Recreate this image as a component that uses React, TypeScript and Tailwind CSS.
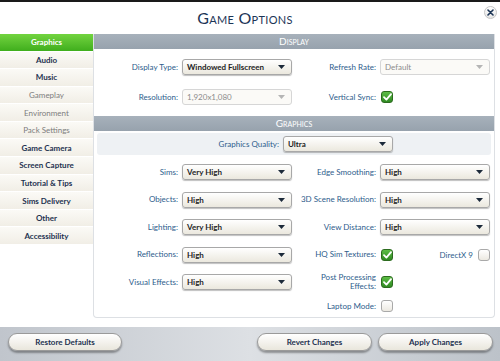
import clsx from 'clsx';

const FONT = { fontFamily: 'Lato, "Open Sans", sans-serif' };

const TABS: { label: string; state: 'active' | 'on' | 'off' }[] = [
  { label: 'Graphics', state: 'active' },
  { label: 'Audio', state: 'on' },
  { label: 'Music', state: 'on' },
  { label: 'Gameplay', state: 'off' },
  { label: 'Environment', state: 'off' },
  { label: 'Pack Settings', state: 'off' },
  { label: 'Game Camera', state: 'on' },
  { label: 'Screen Capture', state: 'on' },
  { label: 'Tutorial & Tips', state: 'on' },
  { label: 'Sims Delivery', state: 'on' },
  { label: 'Other', state: 'on' },
  { label: 'Accessibility', state: 'on' },
];

function Select({ value, disabled }: { value: string; disabled?: boolean }) {
  return (
    <div
      className={clsx(
        'flex h-[16px] w-[110px] items-center justify-between rounded-[3px] border pl-[4px] pr-[6px] text-[8px]',
        disabled
          ? 'border-[#d6d6d6] bg-[#fbfaf7] text-[#8c8c8c]'
          : 'border-[#a8a8a8] bg-gradient-to-b from-white to-[#ebe8de] font-bold text-[#1f1f1f] shadow-[0_1px_1px_rgba(0,0,0,0.25)]'
      )}
    >
      <span>{value}</span>
      <svg width="7" height="4" viewBox="0 0 7 4">
        <path d="M0 0h7L3.5 4z" fill={disabled ? '#b5b5b5' : '#1c2a3a'} />
      </svg>
    </div>
  );
}

function Check({ on }: { on?: boolean }) {
  return (
    <div
      className={clsx(
        'flex h-[12px] w-[12px] items-center justify-center rounded-[3px] border',
        on
          ? 'border-[#2c6b1f] bg-gradient-to-b from-[#5cbd45] to-[#2f8a22]'
          : 'border-[#a9a9a9] bg-gradient-to-b from-white to-[#ece9e1]'
      )}
    >
      {on && (
        <svg width="9" height="8" viewBox="0 0 9 8">
          <path d="M1 4.2 3.4 6.6 8 1.2" fill="none" stroke="white" strokeWidth="1.8" strokeLinecap="round" strokeLinejoin="round" />
        </svg>
      )}
    </div>
  );
}

function Label({ children, w }: { children: React.ReactNode; w: string }) {
  return <div className={clsx('text-right text-[8px] leading-[9px] text-[#2d5d8c]', w)}>{children}</div>;
}

function Row({ left, right }: { left: React.ReactNode; right: React.ReactNode }) {
  return (
    <div className="flex items-center">
      {left}
      {right}
    </div>
  );
}

function Half({ label, children }: { label: React.ReactNode; children?: React.ReactNode }) {
  return (
    <div className="flex items-center gap-[4px]">
      <Label w="w-[84px]">{label}</Label>
      <div className="flex w-[110px] items-center">{children}</div>
    </div>
  );
}

function SectionHead({ title }: { title: string }) {
  return (
    <div className="flex h-[16px] items-center justify-center bg-gradient-to-b from-[#a7b1bb] to-[#97a2ad] text-[10px] text-white [font-variant:small-caps]">
      {title}
    </div>
  );
}

function PillButton({ label, w }: { label: string; w: string }) {
  return (
    <div
      className={clsx(
        'flex h-[18px] items-center justify-center rounded-full border border-[#9a9a9a] bg-gradient-to-b from-white to-[#e9e6dc] text-[8px] font-bold text-[#1e3250] shadow-[0_2px_2px_rgba(0,0,0,0.35)]',
        w
      )}
    >
      {label}
    </div>
  );
}

export default function App() {
  return (
    <div style={FONT} className="relative flex h-[361px] w-[500px] flex-col overflow-hidden border-t-2 border-[#1a1a1a] bg-white">
      {/* Title */}
      <div className="relative flex h-[32px] items-center justify-center pr-[10px]">
        <span className="pt-[1px] text-[16px] tracking-[0.3px] text-[#1c3556] [font-variant:small-caps]">Game Options</span>
        <div className="absolute right-[3px] top-[4px] flex h-[13px] w-[13px] items-center justify-center rounded-full border border-[#c4c4c4] bg-gradient-to-b from-white to-[#e6e6e6]">
          <svg width="7" height="7" viewBox="0 0 7 7">
            <path d="M1 1l5 5M6 1 1 6" stroke="#1c3556" strokeWidth="1.6" strokeLinecap="round" />
          </svg>
        </div>
      </div>

      <div className="flex h-[294px]">
        {/* Sidebar */}
        <div className="flex w-[93px] flex-col">
          {TABS.map(t => (
            <div
              key={t.label}
              className={clsx(
                'flex h-[17.6px] items-center justify-center border-b border-white text-[8px]',
                t.state === 'active'
                  ? 'bg-gradient-to-b from-[#72d43f] to-[#3fae1c] font-bold text-white'
                  : 'bg-gradient-to-b from-[#fbfaf6] to-[#f1eee6]',
                t.state === 'on' && 'font-bold text-[#1e3250]',
                t.state === 'off' && 'text-[#7d7d7d]'
              )}
            >
              {t.label}
            </div>
          ))}
        </div>

        {/* Main panel */}
        <div className="flex h-[284px] w-[402px] flex-col rounded-b-[4px] border border-t-0 border-[#dde0e4] bg-white">
          <SectionHead title="Display" />
          <div className="flex flex-col gap-[14px] pb-[11px] pt-[10px]">
            <Row
              left={<Half label="Display Type:"><Select value="Windowed Fullscreen" /></Half>}
              right={<Half label="Refresh Rate:"><Select value="Default" disabled /></Half>}
            />
            <Row
              left={<Half label="Resolution:"><Select value="1,920x1,080" disabled /></Half>}
              right={<Half label="Vertical Sync:"><div className="pl-[1px]"><Check on /></div></Half>}
            />
          </div>
          <SectionHead title="Graphics" />
          <div className="mx-[3px] mt-[2px] flex h-[23px] items-center justify-end gap-[4px] rounded-[3px] bg-[#eef1f4] pr-[98px]">
            <Label w="">Graphics Quality:</Label>
            <Select value="Ultra" />
          </div>
          <div className="grid grid-rows-[27.5px_27.5px_27.5px_27.5px_27.5px_21px] items-center pt-[3px]">
            <Row
              left={<Half label="Sims:"><Select value="Very High" /></Half>}
              right={<Half label="Edge Smoothing:"><Select value="High" /></Half>}
            />
            <Row
              left={<Half label="Objects:"><Select value="High" /></Half>}
              right={<Half label="3D Scene Resolution:"><Select value="High" /></Half>}
            />
            <Row
              left={<Half label="Lighting:"><Select value="Very High" /></Half>}
              right={<Half label="View Distance:"><Select value="High" /></Half>}
            />
            <Row
              left={<Half label="Reflections:"><Select value="High" /></Half>}
              right={
                <Half label="HQ Sim Textures:">
                  <div className="flex w-full items-center justify-between pl-[1px]">
                    <Check on />
                    <div className="flex items-center gap-[5px]">
                      <span className="text-[8px] text-[#2d5d8c]">DirectX 9</span>
                      <Check />
                    </div>
                  </div>
                </Half>
              }
            />
            <Row
              left={<Half label="Visual Effects:"><Select value="High" /></Half>}
              right={
                <Half label={<>Post Processing<br />Effects:</>}>
                  <div className="pl-[1px]"><Check on /></div>
                </Half>
              }
            />
            <Row
              left={<div className="w-[198px]" />}
              right={<Half label="Laptop Mode:"><div className="pl-[1px]"><Check /></div></Half>}
            />
          </div>
        </div>
      </div>

      {/* Footer */}
      <div className="mt-auto flex h-[34px] items-center bg-gradient-to-r from-[#c0c5cc] via-[#dde0e4] to-[#bcc2c9] pb-[4px] pl-[8px] pr-[7px]">
        <PillButton label="Restore Defaults" w="w-[114px]" />
        <div className="flex-1" />
        <div className="flex gap-[6px]">
          <PillButton label="Revert Changes" w="w-[115px]" />
          <PillButton label="Apply Changes" w="w-[115px]" />
        </div>
      </div>
    </div>
  );
}
